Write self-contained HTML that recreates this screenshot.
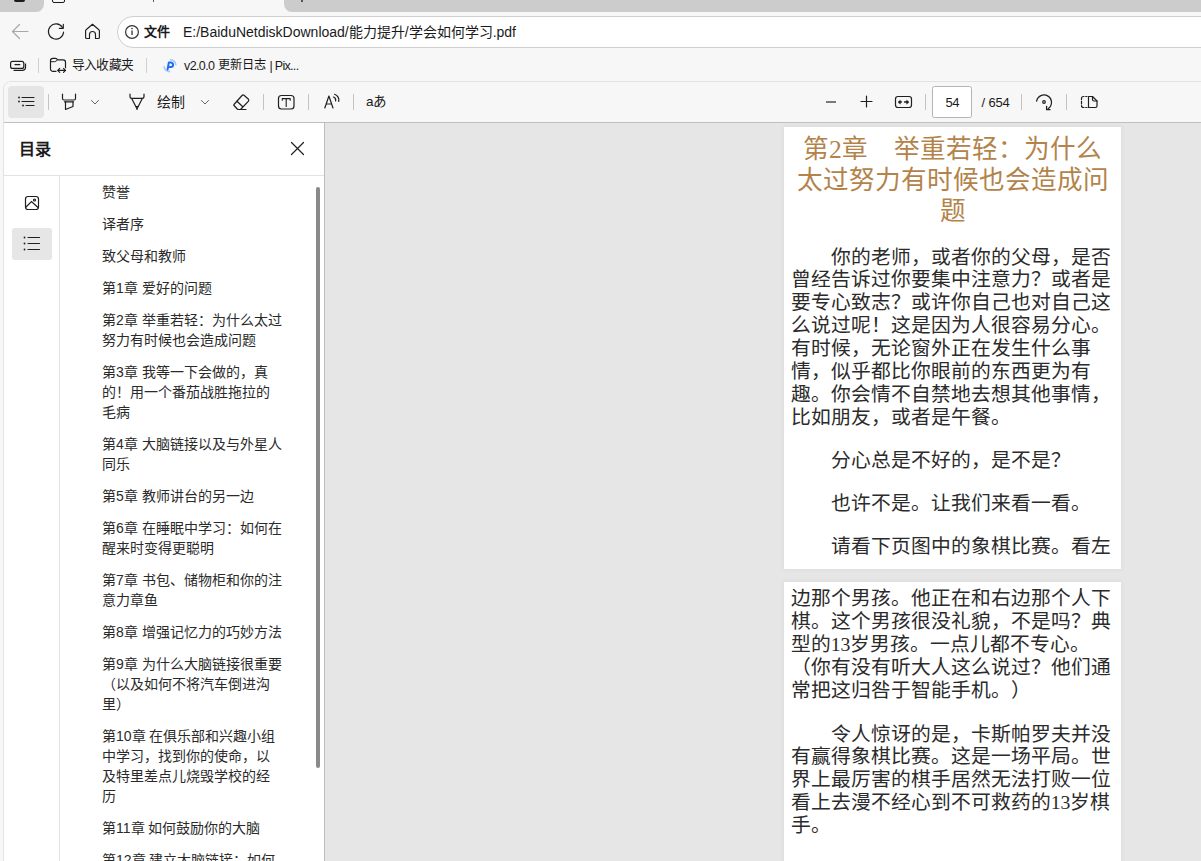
<!DOCTYPE html>
<html lang="zh-CN"><head><meta charset="utf-8">
<style>
*{box-sizing:border-box;margin:0;padding:0;text-spacing-trim:space-all}
html,body{width:1201px;height:861px;overflow:hidden;background:#f7f7f7;font-family:"Liberation Sans",sans-serif;color:#1a1a1a}
.abs{position:absolute}
svg{position:absolute;overflow:visible}
#tabL{left:0;top:0;width:44px;height:12px;background:#cccccc;border-bottom-right-radius:8px}
#tabR{left:284px;top:0;width:917px;height:12px;background:#cccccc;border-bottom-left-radius:8px}
#addr{left:117px;top:16px;width:1120px;height:32px;background:#fff;border:1px solid #cfcfcf;border-radius:16px}
.t14{font-size:14px;line-height:16px;white-space:nowrap}
#content{left:3px;top:81px;width:1230px;height:800px;border:1px solid #e3e3e3;border-radius:8px 0 0 0;background:#f7f7f7;overflow:hidden}
#toolbar{left:0;top:0;width:100%;height:41px;background:#f7f7f7;border-bottom:1px solid #c6c6c6}
.sep{position:absolute;top:94px;width:1px;height:16px;background:#c4c4c4}
#side{left:4px;top:123px;width:320px;height:740px;background:#fff}
#sideB{left:324px;top:123px;width:1px;height:740px;background:#bdbdbd}
#main{left:325px;top:123px;width:876px;height:740px;background:#e6e6e6}
.page{position:absolute;left:784px;width:337px;background:#fff;overflow:hidden;box-shadow:0 0 5px 1px rgba(0,0,0,0.045);font-family:"Liberation Serif",serif}
.toc{position:absolute;left:102px;font-size:14px;line-height:20px;color:#2a2a2a;white-space:nowrap}
.bl{position:absolute;left:6.7px;font-size:19.8px;line-height:22.86px;color:#2b2b2b;white-space:nowrap}
.hd{position:absolute;left:0;width:337px;text-align:center;font-size:25.6px;line-height:31px;color:#b3834a;white-space:nowrap}
</style></head><body>
<!-- tab strip -->
<div id="tabL" class="abs"></div>
<div id="tabR" class="abs"></div>
<div class="abs" style="left:14px;top:0;width:11px;height:2px;background:#1a1a1a;border-radius:0 0 2px 2px"></div>
<div class="abs" style="left:52px;top:-2px;width:13px;height:5px;border:1.3px solid #1a1a1a;border-radius:0 0 2px 2px"></div>

<div class="abs" style="left:301px;top:0;width:1.5px;height:1.5px;background:#555"></div>
<div class="abs" style="left:152.5px;top:0;width:1.5px;height:1.5px;background:#555"></div>
<!-- address row -->
<svg style="left:0;top:0" width="1201" height="50">
  <g fill="none" stroke="#a8a8a8" stroke-width="1.2" stroke-linecap="round" stroke-linejoin="round">
    <path d="M12.5 31.5H28M12.5 31.5L19.5 24.5M12.5 31.5L19.5 38.5"/>
  </g>
  <g fill="none" stroke="#1f1f1f" stroke-width="1.15" stroke-linecap="round" stroke-linejoin="round">
    <path d="M62.5 27.5A7.6 7.6 0 1 0 63.6 32"/>
    <path d="M63.3 24.3V28.3H59.3"/>
    <path d="M85.6 37.5V30.8Q85.6 30.2 86.1 29.8L92.5 24.3L98.9 29.8Q99.4 30.2 99.4 30.8V37.5Q99.4 38.5 98.4 38.5H95.5V34.5A3 3 0 0 0 89.5 34.5V38.5H86.6Q85.6 38.5 85.6 37.5Z"/>
  </g>
</svg>
<div id="addr" class="abs"></div>
<svg style="left:0;top:0" width="400" height="50">
  <circle cx="132" cy="32" r="6.4" fill="none" stroke="#333" stroke-width="1.2"/>
  <rect x="131.4" y="30.5" width="1.3" height="4.5" fill="#333"/>
  <circle cx="132" cy="28.6" r="0.8" fill="#333"/>
</svg>
<div class="abs t14" style="left:144px;top:24px;font-weight:bold;font-size:13px">文件</div>
<div class="abs t14" style="left:183px;top:24px;color:#1a1a1a">E:/BaiduNetdiskDownload/能力提升/学会如何学习.pdf</div>

<!-- favourites bar -->
<svg style="left:0;top:50px" width="320" height="30">
  <g fill="none" stroke="#1f1f1f" stroke-width="1.2" stroke-linejoin="round">
    <rect x="10.6" y="11.4" width="13.2" height="7" rx="2"/>
    <path d="M13.5 20.4H22.5A3 3 0 0 0 25.5 17.4V13.5"/>
    <path d="M14.5 14.6H20.3" stroke-width="1.3"/>
    <path d="M56.5 21.4H53A2.5 2.5 0 0 1 50.5 18.9V10.5A2.3 2.3 0 0 1 52.8 8.3H55.5Q57 8.3 57.5 9.9H63.2A2.3 2.3 0 0 1 65.5 12.2V18.3"/>
    <path d="M50.8 11.7H54.5Q56 11.7 57.3 10" stroke-width="1"/>
    <path d="M57.7 20.4H65.5M59.7 18.4L57.7 20.4L59.7 22.4M63.5 18.4L65.5 20.4L63.5 22.4" stroke-linecap="round"/>
  </g>
  <rect x="38" y="8" width="1" height="15" fill="#d0d0d0"/>
  <rect x="146" y="8" width="1" height="15" fill="#d0d0d0"/>
  <path d="M170.52 9.77A5.95 5.95 0 0 1 175.86 14.67M169.48 21.63A5.95 5.95 0 0 1 164.14 16.73" fill="none" stroke="#a6c8fa" stroke-width="1.6" stroke-linecap="round"/>
  <path d="M167.6 19.4L168.8 12.6H170.9A2.2 2.2 0 0 1 170.9 17H168.2" fill="none" stroke="#1f6ff5" stroke-width="2" stroke-linejoin="round" stroke-linecap="round"/>
</svg>
<div class="abs t14" style="left:72px;top:57px;font-size:12.8px;letter-spacing:-0.8px">导入收藏夹</div>
<div class="abs t14" style="left:184px;top:58px;font-size:12.5px;letter-spacing:-0.6px">v2.0.0</div>
<div class="abs t14" style="left:218px;top:57px;font-size:12.2px">更新日志</div>
<div class="abs t14" style="left:269.5px;top:58px;font-size:12.5px;letter-spacing:-0.7px">| Pix...</div>

<!-- content frame -->
<div id="content" class="abs"></div>
<div class="abs" style="left:4px;top:82px;width:1197px;height:40px;background:#f7f7f7;border-radius:7px 0 0 0"></div>
<div class="abs" style="left:4px;top:122px;width:1197px;height:1px;background:#bfbfbf"></div>

<!-- toolbar -->
<div class="abs" style="left:8px;top:86px;width:36px;height:32px;background:#e5e5e5;border-radius:4px"></div>
<div class="sep" style="left:48px"></div>
<div class="abs" style="left:826px;top:101px;width:10px;height:1.6px;background:#7a7a7a"></div>
<div class="sep" style="left:263px"></div>
<div class="sep" style="left:308px"></div>
<div class="sep" style="left:353px"></div>
<div class="sep" style="left:925px"></div>
<div class="sep" style="left:1021px"></div>
<div class="sep" style="left:1066px"></div>
<svg style="left:0;top:80px" width="1201" height="42">
  <g fill="none" stroke="#1f1f1f" stroke-width="1.2" stroke-linecap="round" stroke-linejoin="round">
    <!-- toc list -->
    <path d="M22 17.5H34M22 21.5H34M26 25.5H34" stroke-width="1.1"/>
    <circle cx="19" cy="17.5" r="0.9" fill="#1f1f1f" stroke="none"/>
    <circle cx="19" cy="21.5" r="0.9" fill="#1f1f1f" stroke="none"/>
    <circle cx="23" cy="25.5" r="0.9" fill="#1f1f1f" stroke="none"/>
    <!-- highlighter -->
    <path d="M62.5 14V18.5Q62.5 20 64 20H74Q75.5 20 75.5 18.5V14"/>
    <path d="M64.5 21.8H73.5"/>
    <path d="M65.5 21.8V29.5L73 26.5V21.8"/>
    <path d="M91.5 20.5L95 24L98.5 20.5" stroke="#666" stroke-width="1"/>
    <!-- draw -->
    <path d="M130 14V16.5Q130 18.4 132 18.4H142Q144 18.4 144 16.5V14"/>
    <path d="M131.8 18.8L135.8 26.6H138.2L142.2 18.8"/>
    <path d="M135.9 26.8L137 29.8L138.1 26.8Z" fill="#1f1f1f" stroke-width="0.8"/>
    <path d="M201.5 20.5L205 24L208.5 20.5" stroke="#666" stroke-width="1"/>
    <!-- eraser -->
    <path d="M234 24.5L242 15.5Q243 14.5 244 15.3L248.5 19.3Q249.3 20.3 248.3 21.3L240.5 29.5H238.5Q237.8 29.5 237.3 29L234 25.5Q233.5 25 234 24.5Z"/>
    <path d="M237 21.2L242.5 26.5M239.5 29.5H246"/>
    <!-- T box -->
    <rect x="278.5" y="15.5" width="15.5" height="13.5" rx="3"/>
    <path d="M282.3 20.3V18.6H290.2V20.3M286.2 18.6V26.4" stroke-width="1.1"/>
    <!-- read aloud -->
    <path d="M324.8 28L328.9 16L333 28M326.1 24H331.7"/>
    <path d="M333.5 17A3.5 3.5 0 0 1 335.6 21M334.6 14.3A6 6 0 0 1 338.7 21.5"/>
    <!-- zoom -->
    <path d="M866.5 96V107M861 101.5H872" transform="translate(0,-80)"/>
    <rect x="895.5" y="16.5" width="16" height="11" rx="2.5"/>
    <path d="M899.3 22H901.5M904.5 22H907.7" stroke-width="1.3"/>
    <path d="M898.3 22L900.3 20.3V23.7Z M908.7 22L906.7 20.3V23.7Z" fill="#1f1f1f" stroke-width="0.6"/>
    <!-- rotate -->
    <path d="M1036.6 101.2A7.5 7.5 0 1 1 1048.3 108.6" transform="translate(0,-80)"/>
    <path d="M1046.6 106.3V109.7H1050" transform="translate(0,-80)" stroke-width="1.3"/>
    <circle cx="1044" cy="22" r="1.3"/>
    <!-- two page -->
    <path d="M1087 16.5H1085.7M1084 16.5H1083.5A2 2 0 0 0 1081.5 18.5V19.5M1081.5 21V24M1081.5 25.5V25.5A2 2 0 0 0 1083.5 27.5H1084M1085.7 27.5H1087"/>
    <path d="M1088.5 16.5H1092.5L1097 21V26A1.5 1.5 0 0 1 1095.5 27.5H1088.5Z"/>
    <path d="M1092.5 16.5V19.5A1.5 1.5 0 0 0 1094 21H1097"/>
  </g>
</svg>
<div class="abs t14" style="left:157px;top:94px;font-size:14px">绘制</div>
<div class="abs t14" style="left:366px;top:94px;font-size:13.5px;letter-spacing:-0.6px">aあ</div>
<div class="abs" style="left:932px;top:86px;width:40px;height:32px;background:#fff;border:1px solid #b4b4b4;border-radius:2.5px"></div>
<div class="abs t14" style="left:945.5px;top:95px;font-size:13px;letter-spacing:-0.4px">54</div>
<div class="abs t14" style="left:981.5px;top:95px;font-size:13px;letter-spacing:-0.15px">/ 654</div>

<!-- sidebar -->
<div id="side" class="abs"></div>
<div id="sideB" class="abs"></div>
<div class="abs" style="left:4px;top:175px;width:320px;height:1px;background:#e3e3e3"></div>
<div class="abs" style="left:59px;top:176px;width:1px;height:700px;background:#e3e3e3"></div>
<div class="abs t14" style="left:19px;top:141px;font-size:16px;line-height:18px;font-weight:bold">目录</div>
<svg style="left:0;top:120px" width="330" height="160">
  <g fill="none" stroke="#1f1f1f" stroke-width="1.2" stroke-linecap="round">
    <path d="M291.5 22.5L303.5 34.5M303.5 22.5L291.5 34.5"/>
    <rect x="25.5" y="76.5" width="13" height="13" rx="2.5"/>
    <path d="M26 87L31.5 81.5L38 87.5"/>
    <circle cx="34.5" cy="80" r="1"/>
  </g>
  <rect x="12" y="108" width="40" height="32" rx="3" fill="#e6e6e6"/>
  <g fill="none" stroke="#1f1f1f" stroke-width="1.2" stroke-linecap="round">
    <path d="M28 117.5H39.5M28 123.5H39.5M28 129.5H39.5" stroke-width="1.1"/>
  </g>
  <circle cx="24.5" cy="117.5" r="0.9" fill="#1f1f1f"/>
  <circle cx="24.5" cy="123.5" r="0.9" fill="#1f1f1f"/>
  <circle cx="24.5" cy="129.5" r="0.9" fill="#1f1f1f"/>
</svg>
<div class="abs" style="left:316px;top:187px;width:4px;height:581px;background:#8a8a8a;border-radius:2px"></div>

<div class="toc" style="top:182px">赞誉</div>
<div class="toc" style="top:214px">译者序</div>
<div class="toc" style="top:246px">致父母和教师</div>
<div class="toc" style="top:278px">第1章 爱好的问题</div>
<div class="toc" style="top:310px">第2章 举重若轻：为什么太过<br>努力有时候也会造成问题</div>
<div class="toc" style="top:362px">第3章 我等一下会做的，真<br>的！用一个番茄战胜拖拉的<br>毛病</div>
<div class="toc" style="top:434px">第4章 大脑链接以及与外星人<br>同乐</div>
<div class="toc" style="top:486px">第5章 教师讲台的另一边</div>
<div class="toc" style="top:518px">第6章 在睡眠中学习：如何在<br>醒来时变得更聪明</div>
<div class="toc" style="top:570px">第7章 书包、储物柜和你的注<br>意力章鱼</div>
<div class="toc" style="top:622px">第8章 增强记忆力的巧妙方法</div>
<div class="toc" style="top:654px">第9章 为什么大脑链接很重要<br>（以及如何不将汽车倒进沟<br>里）</div>
<div class="toc" style="top:726px">第10章 在俱乐部和兴趣小组<br>中学习，找到你的使命，以<br>及特里差点儿烧毁学校的经<br>历</div>
<div class="toc" style="top:818px">第11章 如何鼓励你的大脑</div>
<div class="toc" style="top:850px">第12章 建立大脑链接：如何</div>

<!-- main -->
<div id="main" class="abs"></div>
<div class="page" style="top:127px;height:442px">
  <div class="hd" style="top:7px">第2章　举重若轻：为什么<br>太过努力有时候也会造成问<br>题</div>
  <div class="bl" style="top:118.5px">　　你的老师，或者你的父母，是否<br>曾经告诉过你要集中注意力？或者是<br>要专心致志？或许你自己也对自己这<br>么说过呢！这是因为人很容易分心。<br>有时候，无论窗外正在发生什么事<br>情，似乎都比你眼前的东西更为有<br>趣。你会情不自禁地去想其他事情，<br>比如朋友，或者是午餐。</div>
  <div class="bl" style="top:322px">　　分心总是不好的，是不是？</div>
  <div class="bl" style="top:365px">　　也许不是。让我们来看一看。</div>
  <div class="bl" style="top:408px">　　请看下页图中的象棋比赛。看左</div>
</div>
<div class="page" style="top:582px;height:300px">
  <div class="bl" style="top:5.4px">边那个男孩。他正在和右边那个人下<br>棋。这个男孩很没礼貌，不是吗？典<br>型的13岁男孩。一点儿都不专心。<br>（你有没有听大人这么说过？他们通<br>常把这归咎于智能手机。）</div>
  <div class="bl" style="top:140.5px">　　令人惊讶的是，卡斯帕罗夫并没<br>有赢得象棋比赛。这是一场平局。世<br>界上最厉害的棋手居然无法打败一位<br>看上去漫不经心到不可救药的13岁棋<br>手。</div>
</div>
</body></html>
